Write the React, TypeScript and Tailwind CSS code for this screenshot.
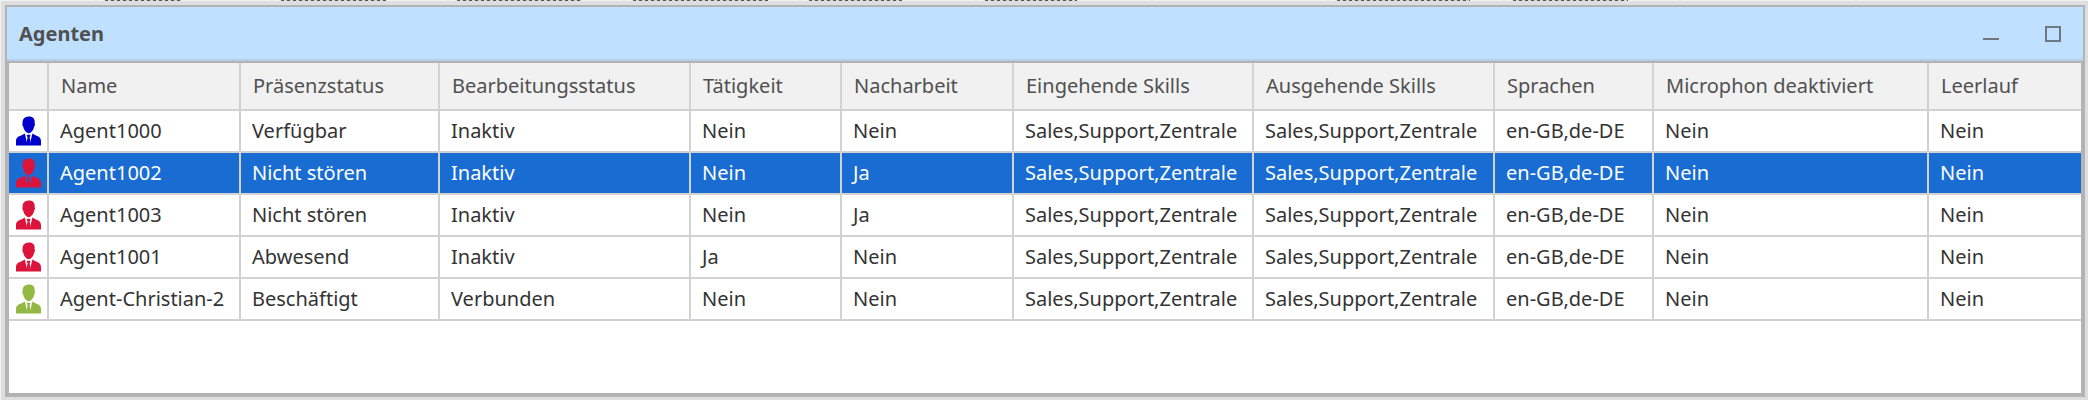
import React from 'react';

interface Agent {
  name: string;
  presence: string;
  processing: string;
  activity: string;
  wrapUp: string;
  iconClass: string;
  selected?: boolean;
}

const columns = [
  { label: 'Name', width: 'w-[192px]' },
  { label: 'Präsenzstatus', width: 'w-[199px]' },
  { label: 'Bearbeitungsstatus', width: 'w-[251px]' },
  { label: 'Tätigkeit', width: 'w-[151px]' },
  { label: 'Nacharbeit', width: 'w-[172px]' },
  { label: 'Eingehende Skills', width: 'w-[240px]' },
  { label: 'Ausgehende Skills', width: 'w-[241px]' },
  { label: 'Sprachen', width: 'w-[159px]' },
  { label: 'Microphon deaktiviert', width: 'w-[275px]' },
  { label: 'Leerlauf', width: 'w-auto' },
];

const agents: Agent[] = [
  { name: 'Agent1000', presence: 'Verfügbar', processing: 'Inaktiv', activity: 'Nein', wrapUp: 'Nein', iconClass: 'text-[#0000cd]' },
  { name: 'Agent1002', presence: 'Nicht stören', processing: 'Inaktiv', activity: 'Nein', wrapUp: 'Ja', iconClass: 'text-[#dc143c]', selected: true },
  { name: 'Agent1003', presence: 'Nicht stören', processing: 'Inaktiv', activity: 'Nein', wrapUp: 'Ja', iconClass: 'text-[#dc143c]' },
  { name: 'Agent1001', presence: 'Abwesend', processing: 'Inaktiv', activity: 'Ja', wrapUp: 'Nein', iconClass: 'text-[#dc143c]' },
  { name: 'Agent-Christian-2', presence: 'Beschäftigt', processing: 'Verbunden', activity: 'Nein', wrapUp: 'Nein', iconClass: 'text-[#93b944]' },
];

const SKILLS = 'Sales,Support,Zentrale';
const LANGUAGES = 'en-GB,de-DE';

// Edge of the window lying behind, one entry per column
const backdropMarks = ['w-[76px]', 'w-[105px]', 'w-[125px]', 'w-[135px]', 'w-[93px]', 'w-[92px]', 'w-0', 'w-[133px]', 'w-[115px]', 'w-0', 'w-0'];

function AgentIcon({ className }: { className: string }) {
  return (
    <svg viewBox="0 0 25 30" className={`block w-[25px] h-[30px] ${className}`} fill="currentColor" aria-hidden="true">
      {/* Head */}
      <path d="M12.5 0.5C16 0.3 18.7 2.2 18.7 5.6L18.6 7.3C19.3 7.6 19 10 18.2 10.6C17.6 13.8 15.4 17.2 12.7 17.2C10 17.2 7.8 13.8 7.2 10.6C6.3 10 6 7.6 6.7 7.3C6.1 3.4 8.6 0.7 12.5 0.5Z" />
      {/* Shoulders and tie */}
      <path d="M8.8 17.6L11.3 28L10.9 25L11.6 21.2L10.6 19.6L11.4 18.8H13.8L14.6 19.6L13.6 21.2L14.3 25L13.9 28L16.4 17.6C19.6 20 25 20.2 25 25V29.5H0V25C0 20.2 5.6 20 8.8 17.6Z" />
    </svg>
  );
}

export default function App() {
  return (
    <div className="min-h-screen flex flex-col bg-[#f2f2f2] pl-px font-['Noto_Sans',sans-serif] text-[20px] leading-[28px]">
      <div className="h-px flex overflow-hidden pl-[94px]" aria-hidden="true">
        {backdropMarks.map((width, idx) => (
          <div key={idx} className="w-[176px] shrink-0 h-px border-l-2 border-[#dedede] pl-2">
            <div className={`${width} h-px bg-[repeating-linear-gradient(90deg,#555_0_3px,#d8d8d8_3px_6px)]`} />
          </div>
        ))}
      </div>

      <div className="flex-1 flex flex-col bg-[#dedede] pt-1 pl-1 pr-[3px] pb-[3px]">
        <section className="flex-1 flex flex-col border-2 border-[#b3b3b3]">
          <header className="h-[56px] flex items-center justify-between bg-[#bfe0ff] border-b-2 border-[#b3b3b3] pl-3 pr-[22px] shadow-[inset_0_-2px_0_#b8cfea]">
            <h1 className="font-bold text-[#505050]">Agenten</h1>
            <div className="flex gap-[46px]">
              <button type="button" aria-label="Minimieren" className="size-4 flex items-end pb-[2px]">
                <span className="w-4 h-[2px] bg-[#6f7780]" />
              </button>
              <button type="button" aria-label="Maximieren" className="size-4 border-2 border-[#6f7780]" />
            </div>
          </header>

          <div className="flex-1 bg-white border-2 border-t-0 border-[#b3b3b3]">
            <table className="w-full table-fixed border-separate border-spacing-0 text-left whitespace-nowrap">
              <thead className="bg-[#f1f1f1] text-[#505050]">
                <tr className="h-[48px]">
                  <th className="w-[40px] p-0 border-r-2 border-b-2 border-[#d2d2d2]" aria-label="Status" />
                  {columns.map((column) => (
                    <th
                      key={column.label}
                      className={`${column.width} py-0 pl-3 pr-0 font-normal border-r-2 last:border-r-0 border-b-2 border-[#d2d2d2]`}
                    >
                      {column.label}
                    </th>
                  ))}
                </tr>
              </thead>
              <tbody>
                {agents.map((agent) => (
                  <AgentRow key={agent.name} agent={agent} />
                ))}
              </tbody>
            </table>
          </div>
        </section>
      </div>
    </div>
  );
}

function AgentRow({ agent }: { agent: Agent }) {
  const cells = [
    agent.name,
    agent.presence,
    agent.processing,
    agent.activity,
    agent.wrapUp,
    SKILLS,
    SKILLS,
    LANGUAGES,
    'Nein',
    'Nein',
  ];

  return (
    <tr className={`h-[42px] ${agent.selected ? 'bg-[#196cd2] text-white' : 'text-[#333333]'}`}>
      <td className="p-0 pl-[7px] border-r-2 border-b-2 border-[#d2d2d2]">
        <AgentIcon className={agent.iconClass} />
      </td>
      {cells.map((cell, idx) => (
        <td key={idx} className="p-0 pl-[11px] border-r-2 last:border-r-0 border-b-2 border-[#d2d2d2]">
          {cell}
        </td>
      ))}
    </tr>
  );
}
